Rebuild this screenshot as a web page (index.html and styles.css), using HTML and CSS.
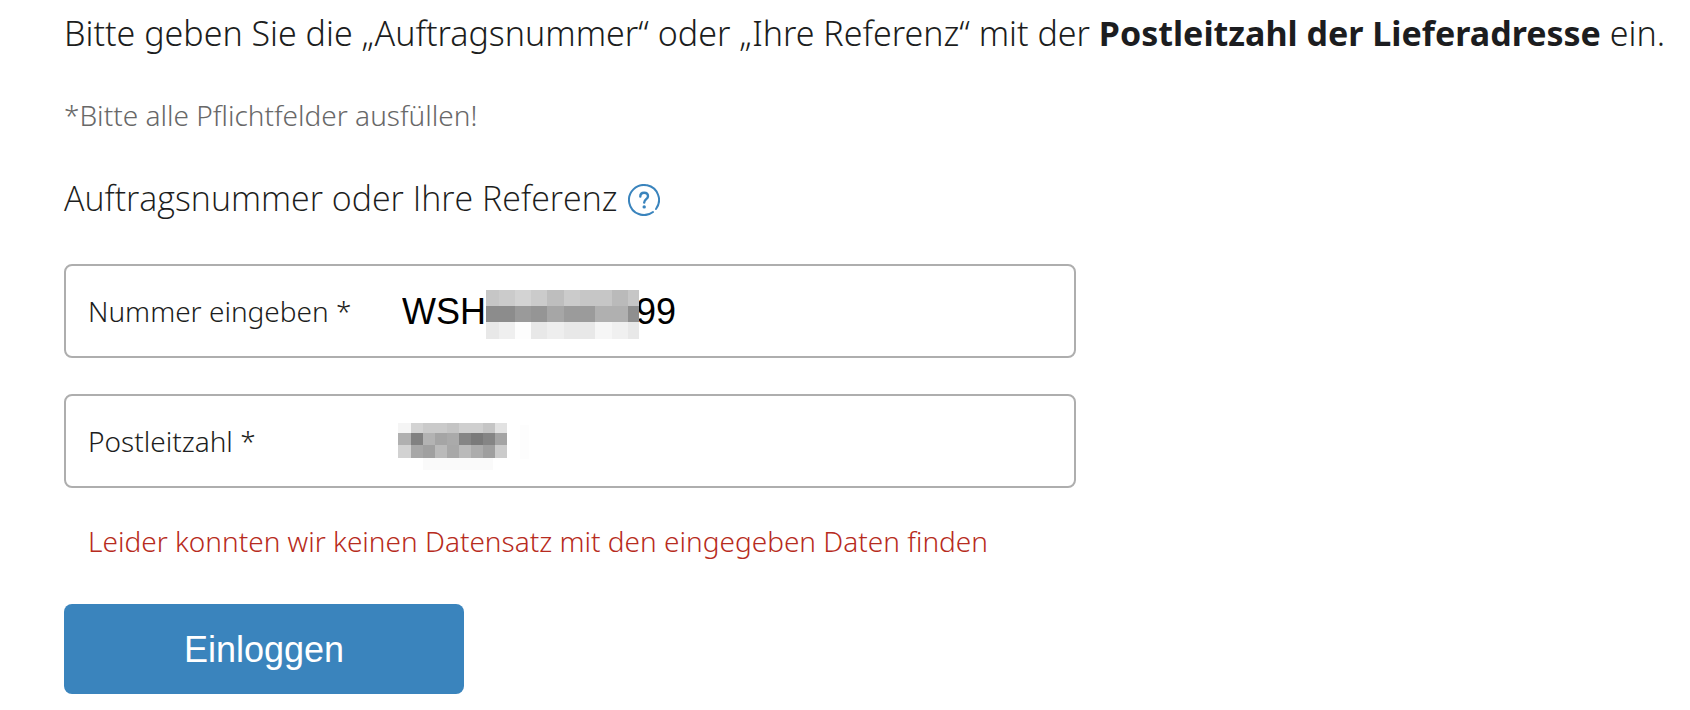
FILE: index.html
```html
<!DOCTYPE html>
<html lang="de">
<head>
    <meta charset="UTF-8">
    <meta name="viewport" content="width=device-width, initial-scale=1.0">
    <title>Sendungsverfolgung</title>
    <link rel="stylesheet" href="styles.css">
</head>
<body>
    <main class="container">
        <p class="intro">Bitte geben Sie die „Auftragsnummer“ oder „Ihre Referenz“ mit der <strong>Postleitzahl der Lieferadresse</strong> ein.</p>
        <p class="hint">*Bitte alle Pflichtfelder ausfüllen!</p>

        <form class="login-form">
            <h2 class="form-title">
                Auftragsnummer oder Ihre Referenz
                <button type="button" class="help-button" aria-label="Hilfe">
                    <svg viewBox="0 0 32 32" width="32" height="32" fill="none" stroke="currentColor" stroke-width="2" stroke-linecap="round">
                        <path d="M28 25 A15 15 0 1 0 25 28"/>
                        <path d="M12.3 12.5 C12.3 10 14 8.8 16.1 8.8 C18.4 8.8 20 10.3 20 12.3 C20 15.2 16.2 15.2 16.2 18.6" stroke-width="2.4"/>
                        <circle cx="16.2" cy="22.9" r="1.7" fill="currentColor" stroke="none"/>
                    </svg>
                </button>
            </h2>

            <div class="field">
                <label for="nummer">Nummer eingeben *</label>
                <div class="field-value">
                    <input type="text" id="nummer" value="WSH&nbsp;&nbsp;&nbsp;&nbsp;&nbsp;&nbsp;&nbsp;&nbsp;&nbsp;&nbsp;&nbsp;&nbsp;&nbsp;&nbsp;&nbsp;99">
                    <svg class="mask mask-number" viewBox="0 0 153 49" width="153" height="49" shape-rendering="crispEdges">
                        <rect width="153" height="17" fill="#c6c6c6"/>
                        <rect x="13" width="16" height="17" fill="#cbcbcb"/>
                        <rect x="29" width="16" height="17" fill="#d3d3d3"/>
                        <rect x="45" width="16" height="17" fill="#cbcbcb"/>
                        <rect x="61" width="17" height="17" fill="#bebebe"/>
                        <rect x="78" width="16" height="17" fill="#cbcbcb"/>
                        <rect x="126" width="16" height="17" fill="#bababa"/>
                        <rect y="16" width="29" height="17" fill="#8c8c8c"/>
                        <rect x="29" y="16" width="16" height="17" fill="#9a9a9a"/>
                        <rect x="45" y="16" width="16" height="17" fill="#959595"/>
                        <rect x="61" y="16" width="17" height="17" fill="#a6a6a6"/>
                        <rect x="78" y="16" width="31" height="17" fill="#9b9b9b"/>
                        <rect x="109" y="16" width="33" height="17" fill="#b0b0b0"/>
                        <rect x="142" y="16" width="11" height="17" fill="#8f8f8f"/>
                        <rect y="32" width="153" height="17" fill="#e8e8e8"/>
                        <rect x="13" y="32" width="16" height="17" fill="#efefef"/>
                        <rect x="29" y="32" width="16" height="17" fill="#fdfdfd"/>
                        <rect x="61" y="32" width="17" height="17" fill="#eeeeee"/>
                        <rect x="109" y="32" width="17" height="17" fill="#f6f6f6"/>
                        <rect x="126" y="32" width="16" height="17" fill="#f0f0f0"/>
                    </svg>
                </div>
            </div>

            <div class="field">
                <label for="plz">Postleitzahl *</label>
                <div class="field-value">
                    <input type="text" id="plz">
                    <svg class="mask mask-zip" viewBox="0 0 132 47" width="132" height="47" shape-rendering="crispEdges">
                        <rect width="13" height="10" fill="#f5f5f5"/>
                        <rect x="13" width="12" height="10" fill="#d3d3d3"/>
                        <rect x="25" width="24" height="10" fill="#cacaca"/>
                        <rect x="49" width="12" height="10" fill="#c4c4c4"/>
                        <rect x="61" width="24" height="10" fill="#cfcfcf"/>
                        <rect x="85" width="12" height="10" fill="#c5c5c5"/>
                        <rect x="97" width="12" height="10" fill="#e2e2e2"/>
                        <rect y="10" width="13" height="12" fill="#b0b0b0"/>
                        <rect x="13" y="10" width="12" height="12" fill="#818181"/>
                        <rect x="25" y="10" width="12" height="12" fill="#b3b3b3"/>
                        <rect x="37" y="10" width="12" height="12" fill="#a5a5a5"/>
                        <rect x="49" y="10" width="12" height="12" fill="#aaaaaa"/>
                        <rect x="61" y="10" width="12" height="12" fill="#858585"/>
                        <rect x="73" y="10" width="12" height="12" fill="#7a7a7a"/>
                        <rect x="85" y="10" width="12" height="12" fill="#858585"/>
                        <rect x="97" y="10" width="12" height="12" fill="#a4a4a4"/>
                        <rect y="22" width="13" height="13" fill="#d2d2d2"/>
                        <rect x="13" y="22" width="12" height="13" fill="#a7a7a7"/>
                        <rect x="25" y="22" width="12" height="13" fill="#a0a0a0"/>
                        <rect x="37" y="22" width="12" height="13" fill="#bababa"/>
                        <rect x="49" y="22" width="12" height="13" fill="#a8a8a8"/>
                        <rect x="61" y="22" width="12" height="13" fill="#bababa"/>
                        <rect x="73" y="22" width="12" height="13" fill="#acacac"/>
                        <rect x="85" y="22" width="12" height="13" fill="#9f9f9f"/>
                        <rect x="97" y="22" width="12" height="13" fill="#cbcbcb"/>
                        <rect x="25" y="35" width="70" height="12" fill="#fafafa"/>
                        <rect x="122" y="2" width="9" height="34" fill="#fdfdfd"/>
                    </svg>
                </div>
            </div>

            <p class="error">Leider konnten wir keinen Datensatz mit den eingegeben Daten finden</p>

            <button type="submit" class="submit-button">Einloggen</button>
        </form>
    </main>
</body>
</html>
```
FILE: styles.css
```css
* {
    margin: 0;
    padding: 0;
    box-sizing: border-box;
}

body {
    font-family: 'Noto Sans', 'Open Sans', sans-serif;
    font-weight: 300;
    color: #1c1d20;
    background: #fff;
}

.container {
    padding: 8px 0 16px 64px;
}

.intro {
    font-size: 34px;
    line-height: 50px;
    white-space: nowrap;
}

.intro strong {
    font-weight: 700;
}

.hint {
    margin-top: 37px;
    font-size: 28px;
    line-height: 40px;
    color: #686868;
}

.login-form {
    max-width: 1012px;
}

.form-title {
    display: flex;
    align-items: flex-end;
    gap: 10px;
    margin: 38px 0 41px;
    font-family: 'Open Sans', 'Noto Sans', sans-serif;
    font-size: 34px;
    line-height: 50px;
    font-weight: 300;
}

.help-button {
    display: flex;
    padding-bottom: 7px;
    border: none;
    background: none;
    color: #3a84bd;
    cursor: pointer;
}

.field {
    display: flex;
    align-items: center;
    height: 94px;
    margin-bottom: 36px;
    padding-left: 22px;
    border: 2px solid #aeaeae;
    border-radius: 8px;
}

.field label {
    flex: 0 0 314px;
    font-size: 28px;
    line-height: 40px;
}

.field-value {
    flex: 1;
    position: relative;
}

.field input {
    display: block;
    width: 100%;
    height: 90px;
    padding-top: 2px;
    border: none;
    border-radius: 8px;
    outline: none;
    background: transparent;
    color: #000;
    font-family: 'Liberation Sans', Arial, sans-serif;
    font-size: 36px;
}

/* pixelated blocks over the private part of the values */
.mask {
    position: absolute;
    pointer-events: none;
}

.mask-number {
    top: 24px;
    left: 84px;
}

.mask-zip {
    top: 27px;
    left: -4px;
}

.error {
    margin-top: -3px;
    padding-left: 24px;
    font-size: 28px;
    line-height: 40px;
    color: #b72b20;
}

.submit-button {
    width: 400px;
    max-width: 100%;
    height: 90px;
    margin-top: 43px;
    padding-top: 2px;
    border: none;
    border-radius: 8px;
    background: #3a84bd;
    color: #fff;
    font-family: 'Liberation Sans', Arial, sans-serif;
    font-size: 36px;
    cursor: pointer;
}
```
